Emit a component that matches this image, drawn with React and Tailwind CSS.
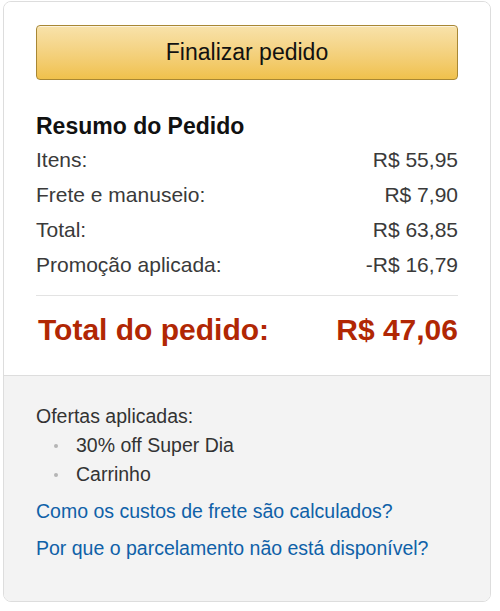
export default function App() {
  const rows = [
    ["Itens:", "R$ 55,95"],
    ["Frete e manuseio:", "R$ 7,90"],
    ["Total:", "R$ 63,85"],
    ["Promoção aplicada:", "-R$ 16,79"],
  ];
  return (
    <div
      className="w-[500px] h-[611px] bg-white pt-[1px] pl-[3px]"
      style={{ fontFamily: '"Liberation Sans", Arial, sans-serif' }}
    >
      <div className="w-[488px] border border-[#dddddd] rounded-[8px] overflow-hidden">
        <div className="px-[32px] pt-[23px] pb-[27px] bg-white">
          <button className="w-full h-[55px] rounded-[4px] border border-[#a88734] bg-gradient-to-b from-[#f8e2aa] to-[#f0c14b] text-[#111] text-[23px] leading-[53px] shadow-[inset_0_1px_0_rgba(255,255,255,0.6)]">
            Finalizar pedido
          </button>
          <h3 className="mt-[32px] text-[23px] leading-[28px] font-bold text-[#111]">
            Resumo do Pedido
          </h3>
          <div className="mt-[2px]">
            {rows.map(([a, b]) => (
              <div key={a} className="flex justify-between text-[21px] leading-[35px] text-[#3a3a3a]">
                <span>{a}</span>
                <span>{b}</span>
              </div>
            ))}
          </div>
          <div className="mt-[13px] border-t border-[#e3e3e3]" />
          <div className="mt-[16px] flex justify-between text-[30px] leading-[36px] font-bold text-[#b12704]">
            <span className="pl-[2px]">Total do pedido:</span>
            <span>R$ 47,06</span>
          </div>
        </div>
        <div className="border-t border-[#dddddd] bg-[#f3f3f3] px-[32px] pt-[26px] pb-[38px] text-[19.5px] leading-[29px]">
          <div className="text-[#333]">Ofertas aplicadas:</div>
          <ul className="text-[#333]">
            {["30% off Super Dia", "Carrinho"].map((t) => (
              <li key={t} className="flex items-center">
                <span className="w-[40px] flex justify-start pl-[18px]">
                  <span className="w-[4px] h-[4px] rounded-full bg-[#b5b5b5]" />
                </span>
                <span>{t}</span>
              </li>
            ))}
          </ul>
          <div className="mt-[8px] text-[#0f61a8]">Como os custos de frete são calculados?</div>
          <div className="mt-[8px] text-[#0f61a8]">Por que o parcelamento não está disponível?</div>
        </div>
      </div>
    </div>
  );
}
